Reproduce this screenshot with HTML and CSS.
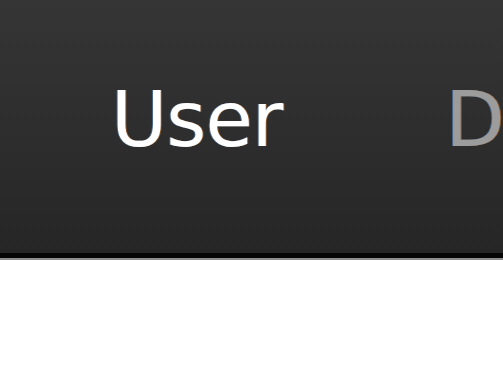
FILE: index.html
```html
<!DOCTYPE html>
<html>
<head>
<meta charset="utf-8">
<link rel="stylesheet" href="styles.css">
</head>
<body>
<header class="topbar">
  <nav class="nav">
    <span class="nav-item active">User</span>
    <span class="nav-item">D</span>
  </nav>
</header>
<div class="rule"></div>
</body>
</html>
```
FILE: styles.css
```css
html, body {
  margin: 0;
  padding: 0;
  background: #ffffff;
  overflow: hidden;
}
.topbar {
  height: 258px;
  box-sizing: border-box;
  padding: 81px 0 0 111px;
  background: linear-gradient(to bottom, #353535 0%, #2e2e2e 50%, #262626 100%);
  border-bottom: 5px solid #060606;
  overflow: hidden;
}
.rule {
  height: 2px;
  background: #8e8e8e;
}
.nav {
  display: flex;
  gap: 163px;
  white-space: nowrap;
}
.nav-item {
  font-family: "DejaVu Sans", sans-serif;
  font-size: 77px;
  line-height: 1;
  letter-spacing: -1px;
  color: #9c9c9c;
  text-shadow: -1px 0 0 rgba(90, 140, 200, 0.6), 1px 0 0 rgba(200, 120, 50, 0.6);
}
.nav-item.active {
  color: #ffffff;
}
```
